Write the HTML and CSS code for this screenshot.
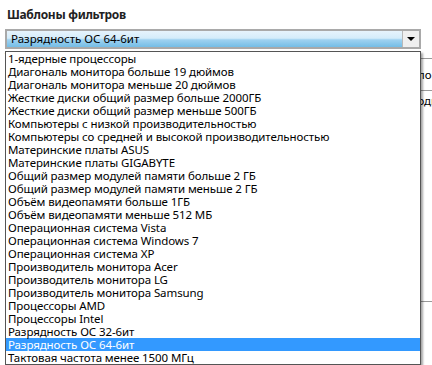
FILE: index.html
```html
<!DOCTYPE html>
<html lang="ru">
<head>
    <meta charset="utf-8" />
    <title>Шаблоны фильтров</title>
    <link rel="stylesheet" href="styles.css">
</head>
<body>

  <div class="panel">
    <h3 class="title">Шаблоны фильтров</h3>

    <!-- Выпадающий список (открыт) -->
    <div class="combo">
      <div class="combo-box">
        <span class="combo-value">Разрядность ОС 64-6ит</span>
        <span class="combo-btn"><span class="arrow"></span></span>
      </div>
      <ul class="combo-list">
        <li>1-ядерные процессоры</li>
        <li>Диагональ монитора больше 19 дюймов</li>
        <li>Диагональ монитора меньше 20 дюймов</li>
        <li>Жесткие диски общий размер больше 2000ГБ</li>
        <li>Жесткие диски общий размер меньше 500ГБ</li>
        <li>Компьютеры с низкой производительностью</li>
        <li>Компьютеры со средней и высокой производительностью</li>
        <li>Материнские платы ASUS</li>
        <li>Материнские платы GIGABYTE</li>
        <li>Общий размер модулей памяти больше 2 ГБ</li>
        <li>Общий размер модулей памяти меньше 2 ГБ</li>
        <li>Объём видеопамяти больше 1ГБ</li>
        <li>Объём видеопамяти меньше 512 МБ</li>
        <li>Операционная система Vista</li>
        <li>Операционная система Windows 7</li>
        <li>Операционная система XP</li>
        <li>Производитель монитора Acer</li>
        <li>Производитель монитора LG</li>
        <li>Производитель монитора Samsung</li>
        <li>Процессоры AMD</li>
        <li>Процессоры Intel</li>
        <li>Разрядность ОС 32-6ит</li>
        <li class="selected">Разрядность ОС 64-6ит</li>
        <li>Тактовая частота менее 1500 МГц</li>
      </ul>
    </div>

    <!-- Содержимое под списком -->
    <div class="under">
      <div class="row r1"><span class="lbl">Условие</span><span class="val"></span></div>
      <div class="row r2"><span class="lbl">Поле</span><span class="val">слово</span></div>
      <div class="row r3"><span class="lbl">Значение</span><span class="val">одно</span></div>
      <p class="note">Выберите шаблон фильтра из списка и нажмите кнопку применить для отбора</p>
    </div>
  </div>

</body>
</html>
```

FILE: styles.css
```css
body {
    margin: 0;
    background: #fff;
    font-family: "Noto Sans", "Open Sans", sans-serif;
    color: #000;
    overflow: hidden;
}
.panel {
    padding: 8px 0 0 5px;
    width: 440px;
}
.title {
    margin: 0 0 8px 2px;
    font-size: 12px;
    line-height: 13px;
    font-weight: bold;
    letter-spacing: -0.3px;
    color: #222;
}
.combo {
    position: relative;
    width: 416px;
}
.combo-box {
    display: flex;
    align-items: stretch;
    height: 16px;
    border: 2px solid #a9a9a9;
    background: linear-gradient(#e6f3fc 0%, #d4ecfa 45%, #9fd2f1 55%, #74bde6 100%);
}
.combo-value {
    flex: 1;
    padding-left: 4px;
    font-size: 11.5px;
    line-height: 16px;
}
.combo-btn {
    width: 16px;
    background: #efefef;
    border-left: 1px solid #b8b8b8;
    display: flex;
    justify-content: center;
    align-items: center;
}
.arrow {
    width: 0; height: 0;
    border-left: 4px solid transparent;
    border-right: 4px solid transparent;
    border-top: 4px solid #000;
}
.combo-list {
    position: absolute;
    top: 22px; left: 0;
    width: 414px;
    margin: 0; padding: 0;
    list-style: none;
    background: #fff;
    border: 1px solid #555;
    box-shadow: 2px 2px 2px rgba(0, 0, 0, 0.35);
    z-index: 1;
}
.combo-list li {
    height: 13px;
    line-height: 13px;
    padding-left: 2px;
    font-size: 11.5px;
    letter-spacing: -0.1px;
    white-space: nowrap;
}
.combo-list .selected { background: #3399ff; color: #fff; }

/* под выпадающим списком */
.row {
    display: flex;
    border-bottom: 1px solid #999;
    font-size: 11.5px;
}
.lbl { width: 419px; }
.val { white-space: nowrap; }
.r1 { height: 9px; }
.r2 { height: 31px; align-items: center; }
.r3 { height: 208px; padding-top: 2px; }
.note {
    margin: 53px 0 0;
    font-size: 11.5px;
    line-height: 13px;
}
```
